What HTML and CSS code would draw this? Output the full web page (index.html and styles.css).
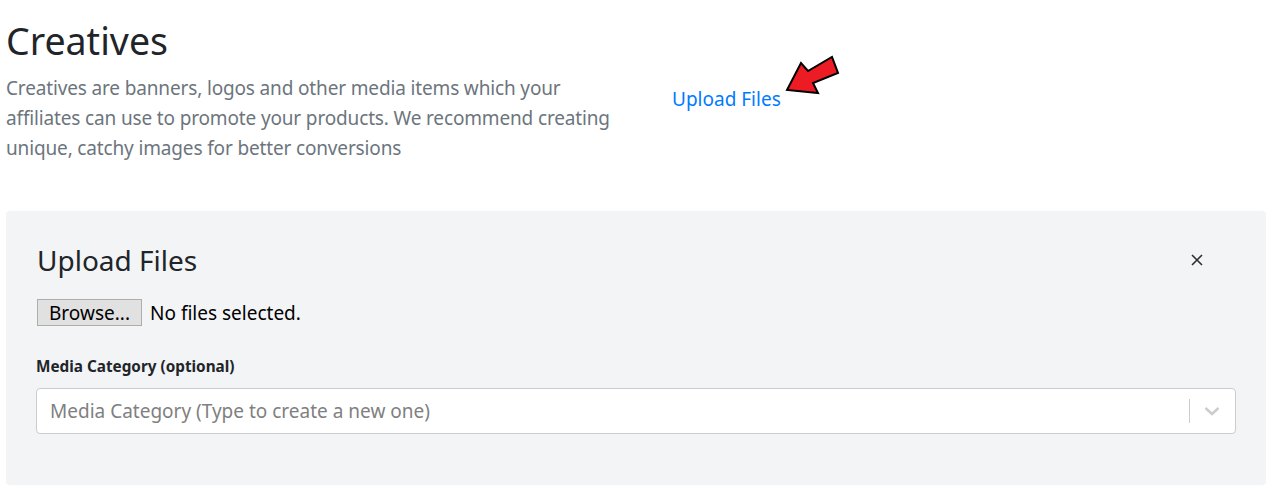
FILE: index.html
```html
<!DOCTYPE html>
<html lang="en">
<head>
<meta charset="utf-8">
<title>Creatives</title>
<link rel="stylesheet" href="styles.css">
</head>
<body>
<div class="page">
  <div class="intro">
    <div class="intro-text">
      <h1 class="title">Creatives</h1>
      <p class="lead">Creatives are banners, logos and other media items which your affiliates can use to promote your products. We recommend creating unique, catchy images for better conversions</p>
    </div>
    <div class="intro-action">
      <a class="upload-link" href="#">Upload Files</a>
      <svg class="pointer-arrow" width="64" height="50" viewBox="0 0 64 50" aria-hidden="true">
        <polygon points="7,40 21,13 28,21 52,7 58,23 33,33 38,43" fill="#ed1c24" stroke="#000" stroke-width="2" stroke-linejoin="miter"/>
      </svg>
    </div>
  </div>

  <section class="panel">
    <div class="panel-head">
      <h3 class="panel-title">Upload Files</h3>
      <button class="close" type="button" aria-label="Close">
        <svg width="12" height="12" viewBox="0 0 12 12"><path d="M1 1 L11 11 M11 1 L1 11" stroke="#2b2f33" stroke-width="1.6"/></svg>
      </button>
    </div>
    <div class="file-row">
      <span class="browse">Browse...</span>
      <span class="file-status">No files selected.</span>
    </div>
    <label class="field-label">Media Category (optional)</label>
    <div class="select">
      <span class="placeholder">Media Category (Type to create a new one)</span>
      <span class="indicators">
        <span class="sep"></span>
        <svg class="chev" width="20" height="20" viewBox="0 0 20 20"><path d="M3.5 7 L10 13 L16.5 7" fill="none" stroke="#cccccc" stroke-width="2.4"/></svg>
      </span>
    </div>
  </section>
</div>
</body>
</html>
```
FILE: styles.css
```css
* { box-sizing: border-box; }
html, body { margin: 0; padding: 0; background: #fff; }
body {
  font-family: "Segoe UI", "Noto Sans", "Open Sans", sans-serif;
  color: #212529;
}
.page { padding: 17px 6px 0 6px; }

.intro { display: flex; }
.intro-text { width: 630px; }
.title {
  margin: 0 0 8px 0;
  font-size: 37.5px;
  font-weight: 400;
  line-height: 48px;
}
.lead {
  margin: 0;
  font-size: 19px;
  line-height: 30px;
  color: #6c757d;
  letter-spacing: -0.15px;
}
.intro-action { position: relative; padding-left: 36px; padding-top: 67px; }
.upload-link {
  color: #007bff;
  text-decoration: none;
  font-size: 19px;
  line-height: 30px;
}
.pointer-arrow { position: absolute; left: 144px; top: 33px; }

.panel {
  margin-top: 48px;
  background: #f3f4f6;
  border-radius: 4px;
  padding: 32px 30px 51px 30px;
}
.panel-head { display: flex; justify-content: space-between; align-items: center; }
.panel-title {
  margin: 0 0 0 1px;
  font-size: 28px;
  font-weight: 400;
  line-height: 34px;
}
.close {
  background: none; border: 0; padding: 0; margin-right: 33px;
  width: 12px; height: 12px; display: flex; cursor: pointer;
}
.file-row { display: flex; align-items: center; margin-top: 22px; height: 27px; }
.browse {
  height: 27px; width: 105px; margin-left: 1px;
  background: #e1e1e1; border: 1px solid #adadad;
  display: flex; align-items: center; justify-content: center;
  font-size: 19px; color: #000;
}
.file-status { margin-left: 8px; font-size: 19px; color: #000; }
.field-label {
  display: block;
  margin-top: 28px;
  font-size: 15.3px; font-weight: 700; line-height: 24px;
}
.select {
  margin-top: 10px;
  height: 46px;
  background: #fff;
  border: 1px solid #cccccc;
  border-radius: 4px;
  display: flex; align-items: center; justify-content: space-between;
  padding-left: 13px;
}
.placeholder { color: #808080; font-size: 19px; }
.indicators { display: flex; align-items: center; height: 100%; }
.sep { width: 1px; height: 24px; background: #cccccc; }
.chev { margin: 0 13px 0 12px; }
```
